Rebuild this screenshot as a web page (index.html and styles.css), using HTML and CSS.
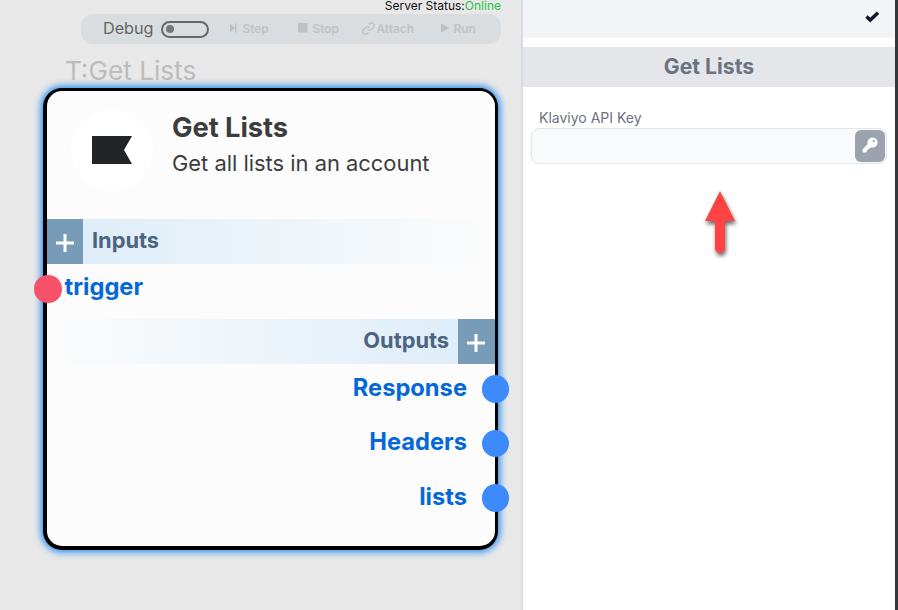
FILE: index.html
```html
<!DOCTYPE html>
<html lang="en">
<head>
<meta charset="utf-8">
<title>Get Lists</title>
<link rel="stylesheet" href="styles.css">
</head>
<body>
<div class="app">
  <main class="canvas">
    <div class="status">Server Status:<span class="online">Online</span></div>
    <div class="toolbar">
      <span class="debug">Debug</span>
      <span class="toggle"><span class="knob"></span></span>
      <span class="tool step"><svg width="8" height="10" viewBox="0 0 8 10"><path d="M0 .5 5 5 0 9.5ZM5 .5h1.500v9H5Z"/></svg>Step</span>
      <span class="tool stop"><svg width="10" height="10" viewBox="0 0 10 10"><path d="M0 0h9.500v9.500H0Z"/></svg>Stop</span>
      <span class="tool attach"><svg class="link" width="13" height="13" viewBox="0 0 24 24"><path d="M10 13a5 5 0 0 0 7.500.5l4-4a5 5 0 0 0-7-7l-2.300 2.300M14 11a5 5 0 0 0-7.500-.5l-4 4a5 5 0 0 0 7 7l2.300-2.300"/></svg>Attach</span>
      <span class="tool run"><svg width="9" height="10" viewBox="0 0 9 10"><path d="M0 .5 8.500 5 0 9.500Z"/></svg>Run</span>
    </div>
    <div class="node-tag">T:Get Lists</div>
    <section class="node">
      <div class="node-body">
        <header class="node-head">
          <div class="logo"><svg width="40" height="28" viewBox="0 0 40 28"><path d="M0 0h40l-8 14 8 14H0Z"/></svg></div>
          <div class="heading">
            <h1>Get Lists</h1>
            <p>Get all lists in an account</p>
          </div>
        </header>
        <div class="band inputs">
          <span class="add"><svg width="18" height="18" viewBox="0 0 18 18"><path d="M9 0v18M0 9h18"/></svg></span>
          <span class="band-name">Inputs</span>
        </div>
        <div class="port in"><i class="dot"></i><span class="trigger">trigger</span></div>
        <div class="band outputs">
          <span class="band-name">Outputs</span>
          <span class="add"><svg width="18" height="18" viewBox="0 0 18 18"><path d="M9 0v18M0 9h18"/></svg></span>
        </div>
        <div class="port out"><span>Response</span><i class="dot"></i></div>
        <div class="port out"><span>Headers</span><i class="dot"></i></div>
        <div class="port out"><span>lists</span><i class="dot"></i></div>
      </div>
    </section>
  </main>
  <aside class="panel">
    <div class="panel-top"><svg width="15" height="12" viewBox="0 0 15 12"><path d="M1.500 5.500 5.200 9 13 1.800"/></svg></div>
    <h2>Get Lists</h2>
    <label class="label">Klaviyo API Key</label>
    <div class="field">
      <button class="key"><svg width="16" height="16" viewBox="0 0 16 16"><path fill-rule="evenodd" d="M10.500.5a5 5 0 1 1-1.300 9.800L7.900 11.500H6.400V13H4.900v1.500L4 15.400H.6v-3.200L5.700 7A5 5 0 0 1 10.500.5ZM11.800 2.900a1.200 1.200 0 1 0 0 2.400 1.200 1.200 0 0 0 0-2.400Z"/></svg></button>
    </div>
    <svg class="arrow" width="50" height="80" viewBox="0 0 50 80"><path d="M25 6 40 36H30V63a5 5 0 0 1-10 0V36H10Z"/></svg>
  </aside>
  <div class="edge"></div>
</div>
</body>
</html>
```

FILE: styles.css
```css
* { box-sizing: border-box; }
body { margin: 0; font-family: Inter, "Liberation Sans", sans-serif; overflow: hidden; }
h1, h2, p { margin: 0; }
svg { display: block; flex: none; }
.app { display: flex; width: 898px; height: 610px; }

.canvas { width: 523px; flex: none; background: #e8e8e8; border-right: 2px solid #dadce1; }
.status { height: 14px; width: 501px; text-align: right; font-size: 12px; line-height: 12px; color: #111; white-space: nowrap; }
.online { color: #28c14b; }
.toolbar { display: flex; align-items: center; width: 420px; height: 30px; margin-left: 81px; padding-left: 22px; border-radius: 12px; background: #dadde0; white-space: nowrap; }
.debug { width: 58px; margin-top: -2px; font-size: 16.200px; color: #656565; }
.toggle { width: 48px; height: 17px; border: 2px solid #686868; border-radius: 9px; padding: 2.500px 3px; margin-right: 21px; }
.knob { display: block; width: 8px; height: 8px; border-radius: 50%; background: #777; }
.tool { display: flex; align-items: center; gap: 4px; margin-top: -2px; font-size: 11.900px; font-weight: 600; color: #c2c2c2; fill: #c0c0c0; }
.step { width: 68px; gap: 4.500px; }
.stop { width: 63.500px; gap: 4.500px; }
.attach { width: 79px; gap: 2px; }
.run { gap: 4px; }
.link { fill: none; stroke: #c0c0c0; stroke-width: 2.500; }
.node-tag { height: 43.500px; padding: 11px 0 0 65px; font-size: 26.200px; line-height: 32px; color: #bcbcbc; }

.node { width: 455px; height: 462px; margin-left: 43px; padding: 3.500px; background: #000; border-radius: 19px; box-shadow: 0 0 7px 2px #2489f0; }
.node-body { height: 100%; background: #fcfcfc; border-radius: 15px; }
.node-head { display: flex; height: 127.500px; padding: 18px 0 0 24px; }
.logo { display: flex; align-items: center; justify-content: center; width: 82px; height: 82px; border-radius: 50%; background: #fff; fill: #232426; }
.heading { padding: 2px 0 0 19.500px; color: #3d3d3d; white-space: nowrap; }
h1 { font-size: 27.300px; line-height: 34px; font-weight: 700; letter-spacing: -.05px; }
.heading p { margin-top: 1.500px; font-size: 21.900px; line-height: 32px; }
.band { display: flex; align-items: center; height: 45.500px; color: #4b6580; font-size: 21.800px; font-weight: 700; }
.inputs { background: linear-gradient(90deg, #dcecf8, #fcfcfc); }
.outputs { justify-content: flex-end; background: linear-gradient(270deg, #dcecf8, #fcfcfc); }
.band-name { padding: 0 9px; margin-top: -3px; }
.add { display: flex; align-items: center; justify-content: center; width: 36.500px; height: 45.500px; padding-top: 3px; background: #789cb8; }
.add path { stroke: #fff; stroke-width: 3; }
.port { display: flex; align-items: center; height: 54.500px; font-size: 23.700px; font-weight: 700; color: #0568d8; }
.port span { margin-top: -8px; }
.port .trigger { margin-top: -10px; }
.dot { width: 27.500px; height: 27.500px; border-radius: 50%; flex: none; margin-top: -5px; }
.in .dot { margin-left: -12.500px; margin-right: 3px; background: #f75269; }
.out { justify-content: flex-end; }
.out .dot { margin-left: 14.500px; margin-right: -14.500px; background: #3c8afb; }

.panel { width: 372px; flex: none; background: #fff; }
.panel-top { display: flex; justify-content: flex-end; height: 38px; padding: 11px 15.500px 0 0; background: #f3f4f6; }
.panel-top path { fill: none; stroke: #111827; stroke-width: 3.500; }
h2 { height: 40px; margin-top: 9px; background: #e5e6ea; color: #6b7280; font-size: 21.200px; line-height: 39px; font-weight: 700; text-align: center; }
.label { display: block; margin: 22px 0 0 16px; height: 19px; font-size: 14px; line-height: 18px; color: #6b7280; }
.field { display: flex; justify-content: flex-end; width: 356px; height: 36px; margin-left: 8px; padding: 1px; border: 1px solid #e2e5e9; border-radius: 8px; background: #f9fafb; }
.key { display: flex; align-items: flex-start; justify-content: center; width: 30px; height: 32px; padding: 7px 0 0; border: 0; border-radius: 6px; background: #9ca3af; fill: #fff; }
.arrow { margin: 21px 0 0 172px; fill: #ff4343; filter: drop-shadow(1px 3px 2px rgba(0, 0, 0, .6)); }
.edge { width: 3px; background: #353638; }
```
